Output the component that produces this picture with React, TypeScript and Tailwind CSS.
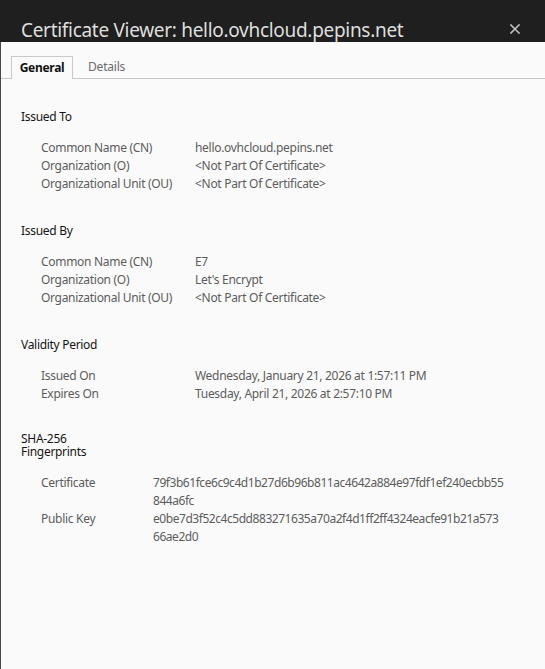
import React from "react";

const font = { fontFamily: '"Noto Sans", "Open Sans", sans-serif' };

function Row({ label, value }: { label: string; value: React.ReactNode }) {
  return (
    <div className="flex text-[12px] tracking-[-0.3px] leading-[18px] text-[#5c5c5c]">
      <div className="w-[174px] shrink-0 pl-[20px] whitespace-nowrap">{label}</div>
      <div className="whitespace-nowrap">{value}</div>
    </div>
  );
}

function Section({ title, rows }: { title: string; rows: [string, string][] }) {
  return (
    <div className="mt-[29px] first:mt-0">
      <div className="text-[12px] tracking-[-0.3px] leading-[18px] text-[#151515]">{title}</div>
      <div className="mt-[13px]">
        {rows.map(([l, v]) => (
          <Row key={l} label={l} value={v} />
        ))}
      </div>
    </div>
  );
}

export default function App() {
  return (
    <div className="w-[545px] h-[669px] flex flex-col bg-[#fafafa] overflow-hidden" style={font}>
      <div className="h-[42px] shrink-0 bg-[#1f1f1f] flex items-start justify-between pl-[21px] pr-[25px] pt-[16px]">
        <div className="text-[19px] tracking-[-0.3px] leading-[28px] text-[#dedede] whitespace-nowrap">
          Certificate Viewer: hello.ovhcloud.pepins.net
        </div>
        <svg width="10" height="10" viewBox="0 0 10 10" className="mt-[8px]">
          <path d="M1 1 L9 9 M9 1 L1 9" stroke="#bdbdbd" strokeWidth="1.6" strokeLinecap="square" />
        </svg>
      </div>
      <div className="flex-1 flex flex-col border-l border-[#484848]">
        <div className="mt-[14px] flex items-end border-b border-[#c9c9c9] h-[23px]">
          <div className="w-[10px]" />
          <div className="h-[23px] -mb-px w-[62px] border border-b-0 border-[#c9c9c9] bg-[#fafafa] flex items-center justify-center text-[12px] tracking-[-0.3px] font-bold text-[#111]">
            General
          </div>
          <div className="h-[22px] flex items-center pl-[15px] text-[12px] tracking-[-0.2px] text-[#6a6a6a]">Details</div>
        </div>
        <div className="pl-[20px] pt-[29px]">
          <Section
            title="Issued To"
            rows={[
              ["Common Name (CN)", "hello.ovhcloud.pepins.net"],
              ["Organization (O)", "<Not Part Of Certificate>"],
              ["Organizational Unit (OU)", "<Not Part Of Certificate>"],
            ]}
          />
          <Section
            title="Issued By"
            rows={[
              ["Common Name (CN)", "E7"],
              ["Organization (O)", "Let's Encrypt"],
              ["Organizational Unit (OU)", "<Not Part Of Certificate>"],
            ]}
          />
          <Section
            title="Validity Period"
            rows={[
              ["Issued On", "Wednesday, January 21, 2026 at 1:57:11 PM"],
              ["Expires On", "Tuesday, April 21, 2026 at 2:57:10 PM"],
            ]}
          />
          <div className="mt-[29px]">
            <div className="text-[12px] tracking-[-0.3px] leading-[13px] text-[#151515]">
              <div>SHA-256</div>
              <div>Fingerprints</div>
            </div>
            <div className="mt-[16px] text-[12px] tracking-[-0.3px] leading-[18px] text-[#5c5c5c]">
              <div className="flex">
                <div className="w-[132px] shrink-0 pl-[20px]">Certificate</div>
                <div className="tracking-[-0.45px]">
                  <div>79f3b61fce6c9c4d1b27d6b96b811ac4642a884e97fdf1ef240ecbb55</div>
                  <div>844a6fc</div>
                </div>
              </div>
              <div className="flex">
                <div className="w-[132px] shrink-0 pl-[20px]">Public Key</div>
                <div className="tracking-[-0.45px]">
                  <div>e0be7d3f52c4c5dd883271635a70a2f4d1ff2ff4324eacfe91b21a573</div>
                  <div>66ae2d0</div>
                </div>
              </div>
            </div>
          </div>
        </div>
      </div>
    </div>
  );
}
